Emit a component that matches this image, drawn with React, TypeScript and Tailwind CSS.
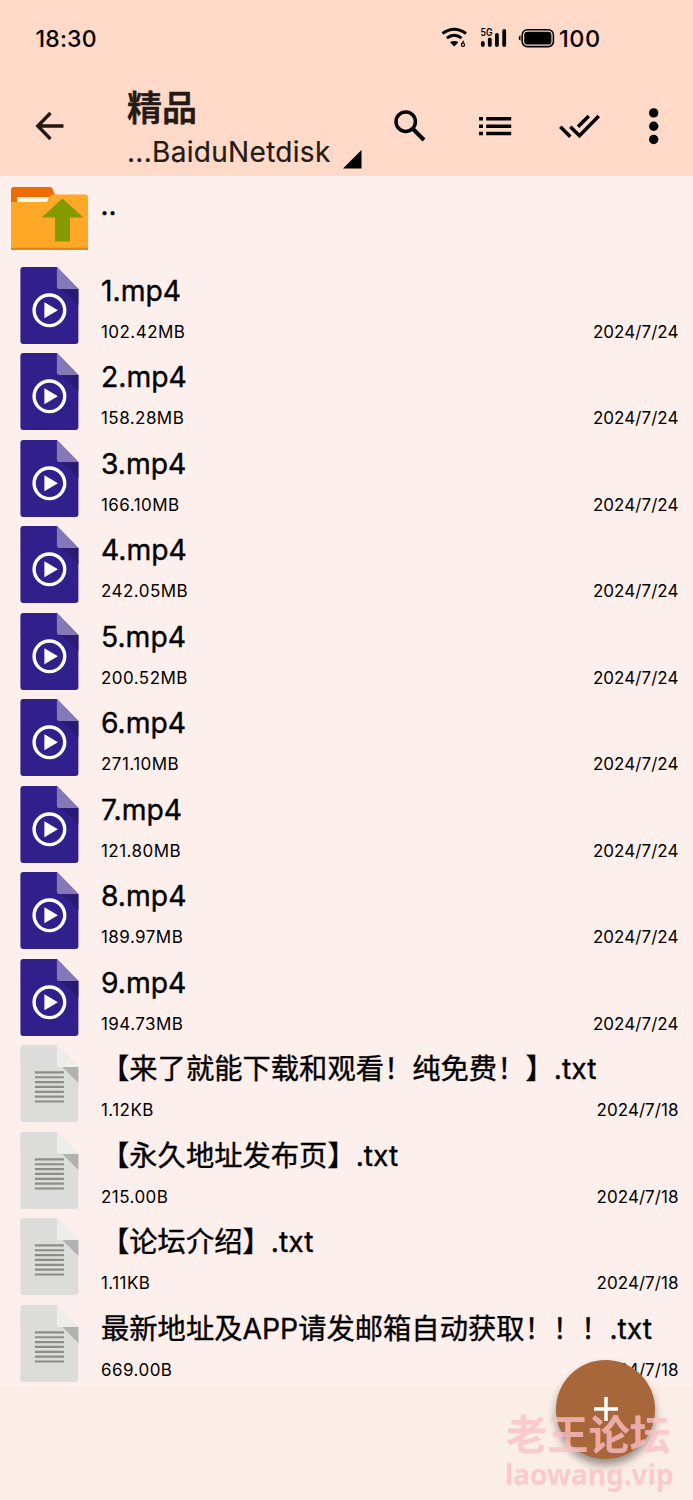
type FileKind = "video" | "text";

interface FileItem {
  name: string;
  size: string;
  date: string;
  kind: FileKind;
}

const files: FileItem[] = [
  { name: "1.mp4", size: "102.42MB", date: "2024/7/24", kind: "video" },
  { name: "2.mp4", size: "158.28MB", date: "2024/7/24", kind: "video" },
  { name: "3.mp4", size: "166.10MB", date: "2024/7/24", kind: "video" },
  { name: "4.mp4", size: "242.05MB", date: "2024/7/24", kind: "video" },
  { name: "5.mp4", size: "200.52MB", date: "2024/7/24", kind: "video" },
  { name: "6.mp4", size: "271.10MB", date: "2024/7/24", kind: "video" },
  { name: "7.mp4", size: "121.80MB", date: "2024/7/24", kind: "video" },
  { name: "8.mp4", size: "189.97MB", date: "2024/7/24", kind: "video" },
  { name: "9.mp4", size: "194.73MB", date: "2024/7/24", kind: "video" },
  { name: "【来了就能下载和观看！纯免费！】.txt", size: "1.12KB", date: "2024/7/18", kind: "text" },
  { name: "【永久地址发布页】.txt", size: "215.00B", date: "2024/7/18", kind: "text" },
  { name: "【论坛介绍】.txt", size: "1.11KB", date: "2024/7/18", kind: "text" },
  { name: "最新地址及APP请发邮箱自动获取！！！.txt", size: "669.00B", date: "2024/7/18", kind: "text" },
];

const VideoIcon = () => (
  <svg width="59" height="77" viewBox="-0.4 0 59 77">
    <path d="M3 0H36.500L58 22V74a3 3 0 0 1-3 3H3a3 3 0 0 1-3-3V3a3 3 0 0 1 3-3Z" fill="#311f8c" />
    <path d="M41 22H58V38Z" fill="#291a75" />
    <path d="M36.500 0L58 22H39a2.500 2.500 0 0 1-2.500-2.500Z" fill="#8478b9" />
    <circle cx="29" cy="43.300" r="15.300" fill="none" stroke="#fff" strokeWidth="3.400" />
    <path d="M24 35.300V51.300L37.500 43.300Z" fill="#fff" />
  </svg>
);

const TextIcon = () => (
  <svg width="59" height="77" viewBox="-0.4 0 59 77">
    <path d="M3 0H36.500L58 22V74a3 3 0 0 1-3 3H3a3 3 0 0 1-3-3V3a3 3 0 0 1 3-3Z" fill="#dcdcda" />
    <path d="M42 22H58V38Z" fill="#b1b1b0" />
    <path d="M36.500 0L58 22H39a2.500 2.500 0 0 1-2.500-2.500Z" fill="#ededeb" />
    <path
      d="M14.500 27.400H43.500M14.500 32.250H43.500M14.500 37.100H43.500M14.500 41.950H43.500M14.500 46.800H43.500M14.500 51.650H43.500M14.500 56.500H43.500"
      stroke="#8c8c8b"
      strokeWidth="2.200"
    />
  </svg>
);

const FolderUpIcon = () => (
  <svg width="77" height="63" viewBox="0 0 77 63">
    <path d="M0 20V3a3 3 0 0 1 3-3H39q2 0 2.700 2L45 11V20Z" fill="#ef6c00" />
    <path d="M6 10H40V20H6Z" fill="#fff8e1" />
    <path d="M0 15H36l2-5q1-2.500 4-2.500H74a3 3 0 0 1 3 3V63H0Z" fill="#ffa726" />
    <path d="M0 60.700H77V63H0Z" fill="#dc8818" />
    <path d="M51.500 11.500L72.500 30.500H59V54.500H44V30.500H30.500Z" fill="#859900" />
  </svg>
);

const StatusBar = () => (
  <div className="flex h-[76px] items-center pl-[35.5px] text-black">
    <span className="w-[405px] pt-0.5 text-[23px] font-medium tracking-[0.2px]">18:30</span>
    {/* Wifi 6 */}
    <svg width="27" height="22" viewBox="0 0 27 22" fill="none" stroke="#000">
      <path d="M1.500 6.500Q13.200-2 25 6.500" strokeWidth="3" />
      <path d="M5.800 11.200Q13.200 5.500 20.600 11.200" strokeWidth="2.900" />
      <path d="M9 15.200q4.200-2.600 8.400 0L13.200 19.500Z" fill="#000" stroke="none" />
      <path d="M22.700 13.700l-1.800 3" strokeWidth="1.200" />
      <circle cx="22" cy="17.700" r="1.600" strokeWidth="1.200" />
    </svg>
    {/* Mobile signal */}
    <svg className="ml-[12.500px]" width="27" height="22" viewBox="0 0 27 22">
      <g stroke="#000" strokeWidth="3.800" strokeLinecap="round">
        <path d="M2.800 16V18M9.800 12.500V18M16.900 8V18M24.200 3.800V18" />
      </g>
      <text x="0.500" y="8.500" className="font-['Inter'] text-[10px] font-semibold" textLength="12" lengthAdjust="spacingAndGlyphs">
        5G
      </text>
    </svg>
    {/* Battery */}
    <svg className="ml-[11px]" width="37" height="20" viewBox="0 0 37 20">
      <path d="M2.500 7.300Q.6 7.800 .6 10T2.500 12.700Z" fill="#000" />
      <rect x="4.200" y="1.800" width="31.200" height="16.800" rx="5" fill="none" stroke="#000" strokeWidth="1.600" />
      <rect x="6.200" y="3.800" width="27.200" height="12.800" rx="3.200" fill="#000" />
    </svg>
    <span className="ml-1 pt-0.5 text-[23.5px] font-medium tracking-[0.5px]">100</span>
  </div>
);

const Toolbar = () => (
  <div className="flex h-[100px] items-center">
    <svg className="ml-[34px]" width="30" height="30" viewBox="0 0 30 30" fill="none" stroke="#231813" strokeWidth="3.400">
      <path d="M29.500 15H4M16.500 2L3.800 15L16.500 28" />
    </svg>
    <div className="ml-[63px] flex w-[206px] flex-col pt-[8px] text-[#231a15]">
      <h1 className="h-[43px] text-[35px] leading-[40px] font-medium [-webkit-text-stroke:0.7px]">精品</h1>
      <div className="flex h-[42px]">
        <span className="w-[216px] text-[28px] leading-[42px] tracking-[0.3px] [-webkit-text-stroke:0.2px]">...BaiduNetdisk</span>
        <svg className="mt-[19px] -mr-[30px] shrink-0" width="19" height="19" viewBox="0 0 19 19">
          <path d="M18.500 0V18.500H0Z" fill="#000" />
        </svg>
      </div>
    </div>
    <div className="ml-[61px] flex items-center">
      <svg width="32" height="32" viewBox="0 0 32 32" fill="none" stroke="#000" strokeWidth="3.500">
        <circle cx="11.700" cy="11.700" r="9.700" />
        <path d="M18.500 18.500L30 30" strokeWidth="4" />
      </svg>
      <svg className="ml-[53px]" width="33" height="20" viewBox="0 0 33 20" stroke="#000" strokeWidth="3.600">
        <path d="M0 2.700H4M0 10.200H4M0 17.500H4M7.200 2.700H32.200M7.200 10.200H32.200M7.200 17.500H32.200" />
      </svg>
      <svg className="ml-[47px]" width="41" height="24" viewBox="0 0 41 24" fill="none" stroke="#000" strokeWidth="3.500">
        <path d="M1.300 12.700L11.300 22.700M11.300 12.700L20.500 21.700L39.800 2M19 12.700L29.800 2" />
      </svg>
      <svg className="ml-[48px]" width="12" height="38" viewBox="0 0 12 38">
        <circle cx="5.700" cy="5.900" r="4.700" />
        <circle cx="5.700" cy="19.200" r="4.700" />
        <circle cx="5.700" cy="32.500" r="4.700" />
      </svg>
    </div>
  </div>
);

const FileRow = ({ file }: { file: FileItem }) => (
  <li className="flex h-[86.53px] pt-[4px]">
    <div className="w-[81px] shrink-0 pl-[20px]">
      {file.kind === "video" ? <VideoIcon /> : <TextIcon />}
    </div>
    <div className="flex-1 pl-[20px]">
      <div className="h-[48px] text-[28.3px] leading-[49.6px] whitespace-nowrap [-webkit-text-stroke:0.35px]">{file.name}</div>
      <div className="flex justify-between pr-[14.5px] text-[17px] leading-[34px]">
        <span className="tracking-[0.45px]">{file.size}</span>
        <span className="tracking-[0.05px]">{file.date}</span>
      </div>
    </div>
  </li>
);

export default function App() {
  return (
    <div className="relative h-[1500px] w-[693px] overflow-hidden bg-[#fbeee6] font-['Inter','Noto_Sans_CJK_SC',sans-serif]">
      <header className="h-[176px] bg-[#ffdac8]">
        <StatusBar />
        <Toolbar />
      </header>

      <ul className="bg-[#fdefeb] text-black">
        <li className="flex h-[86.5px] pt-[11px] pl-[11px]">
          <FolderUpIcon />
          <span className="ml-[12.5px] text-[28px] leading-[37px] [-webkit-text-stroke:0.35px]">..</span>
        </li>
        {files.map((file) => (
          <FileRow key={file.name} file={file} />
        ))}
      </ul>

      {/* Add button */}
      <button className="absolute top-[1359.5px] left-[556px] flex size-[99px] items-center justify-center rounded-full bg-[#a8663b] shadow-[0_6px_9px_rgba(0,0,0,0.4)]">
        <svg width="26" height="26" viewBox="0 0 26 26" stroke="#fff" strokeWidth="3.500">
          <path d="M13 1V25M1 13H25" />
        </svg>
      </button>

      {/* Watermark */}
      <div className="absolute top-[1411px] left-[506px] w-[180px] whitespace-nowrap text-[#fcc0c7]/80">
        <div className="text-[41.2px] leading-[48px] font-bold">老王论坛</div>
        <div className="-ml-px font-['Noto_Sans','Open_Sans',sans-serif] text-[28px] leading-[31px] font-bold">laowang.vip</div>
      </div>
    </div>
  );
}
